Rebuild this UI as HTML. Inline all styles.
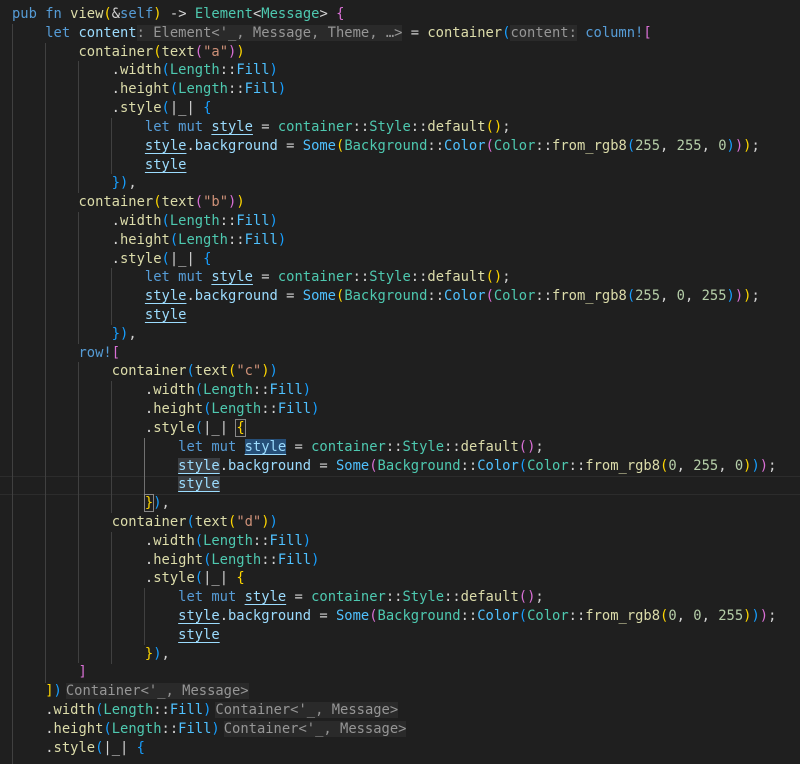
<!DOCTYPE html>
<html><head><meta charset="utf-8"><style>
html,body{margin:0;padding:0;background:#1f1f1f;width:800px;height:748px;overflow:hidden}
pre{position:absolute;left:12px;top:5px;margin:0;font-family:"DejaVu Sans Mono","Liberation Mono",monospace;font-size:13.8px;line-height:18.82px;color:#d4d4d4;white-space:pre}
.k{color:#569cd6}.f{color:#dcdcaa}.t{color:#4ec9b0}.v{color:#9cdcfe}.s{color:#ce9178}.n{color:#b5cea8}
.c{color:#4fc1ff}.g{color:#ffd700}.m{color:#da70d6}.b{color:#179fff}
.h{color:#969696;background:#2a2a2a}
.hm{margin-left:4px}
.u{text-decoration:underline;text-underline-offset:3px}
.w{background:#264f78}.x{background:#3a3d41}
.bx{outline:1px solid #888}
.gd{position:absolute;width:1px;background:#404040}
.cl{position:absolute;left:0;width:800px;top:475.8px;height:18.8px;border-top:1px solid #2c2c2c;border-bottom:1px solid #2c2c2c;box-sizing:border-box}
</style></head><body>
<div class="cl"></div>
<div class="gd" style="left:12px;top:23.8px;height:740px"></div>
<div class="gd" style="left:45px;top:42.6px;height:640px"></div>
<div class="gd" style="left:78px;top:61.4px;height:131.7px"></div>
<div class="gd" style="left:78px;top:212px;height:131.7px"></div>
<div class="gd" style="left:78px;top:362.4px;height:301px"></div>
<div class="gd" style="left:111px;top:117.9px;height:56.5px"></div>
<div class="gd" style="left:111px;top:268.4px;height:56.5px"></div>
<div class="gd" style="left:111px;top:381.4px;height:131.7px"></div>
<div class="gd" style="left:111px;top:531.9px;height:131.7px"></div>
<div class="gd" style="left:144px;top:437.9px;height:56.5px;background:#707070"></div>
<div class="gd" style="left:144px;top:588.4px;height:56.5px"></div>
<pre><span class="k">pub</span> <span class="k">fn</span> <span class="f">view</span><span class="g">(</span>&amp;<span class="k">self</span><span class="g">)</span> -&gt; <span class="t">Element</span>&lt;<span class="t">Message</span>&gt; <span class="m">{</span>
    <span class="k">let</span> <span class="v">content</span><span class="h">: Element&lt;'_, Message, Theme, …&gt;</span> = <span class="f">container</span><span class="b">(</span><span class="h">content:</span> <span class="k">column!</span><span class="m">[</span>
        <span class="f">container</span><span class="g">(</span><span class="f">text</span><span class="m">(</span><span class="s">"a"</span><span class="m">)</span><span class="g">)</span>
            .<span class="f">width</span><span class="b">(</span><span class="t">Length</span>::<span class="c">Fill</span><span class="b">)</span>
            .<span class="f">height</span><span class="b">(</span><span class="t">Length</span>::<span class="c">Fill</span><span class="b">)</span>
            .<span class="f">style</span><span class="b">(</span>|_| <span class="b">{</span>
                <span class="k">let</span> <span class="k">mut</span> <span class="v u">style</span> = <span class="t">container</span>::<span class="t">Style</span>::<span class="f">default</span><span class="g">()</span>;
                <span class="v u">style</span>.<span class="v">background</span> = <span class="c">Some</span><span class="g">(</span><span class="t">Background</span>::<span class="c">Color</span><span class="m">(</span><span class="t">Color</span>::<span class="f">from_rgb8</span><span class="b">(</span><span class="n">255</span>, <span class="n">255</span>, <span class="n">0</span><span class="b">)</span><span class="m">)</span><span class="g">)</span>;
                <span class="v u">style</span>
            <span class="b">})</span>,
        <span class="f">container</span><span class="g">(</span><span class="f">text</span><span class="m">(</span><span class="s">"b"</span><span class="m">)</span><span class="g">)</span>
            .<span class="f">width</span><span class="b">(</span><span class="t">Length</span>::<span class="c">Fill</span><span class="b">)</span>
            .<span class="f">height</span><span class="b">(</span><span class="t">Length</span>::<span class="c">Fill</span><span class="b">)</span>
            .<span class="f">style</span><span class="b">(</span>|_| <span class="b">{</span>
                <span class="k">let</span> <span class="k">mut</span> <span class="v u">style</span> = <span class="t">container</span>::<span class="t">Style</span>::<span class="f">default</span><span class="g">()</span>;
                <span class="v u">style</span>.<span class="v">background</span> = <span class="c">Some</span><span class="g">(</span><span class="t">Background</span>::<span class="c">Color</span><span class="m">(</span><span class="t">Color</span>::<span class="f">from_rgb8</span><span class="b">(</span><span class="n">255</span>, <span class="n">0</span>, <span class="n">255</span><span class="b">)</span><span class="m">)</span><span class="g">)</span>;
                <span class="v u">style</span>
            <span class="b">})</span>,
        <span class="k">row!</span><span class="m">[</span>
            <span class="f">container</span><span class="b">(</span><span class="f">text</span><span class="g">(</span><span class="s">"c"</span><span class="g">)</span><span class="b">)</span>
                .<span class="f">width</span><span class="b">(</span><span class="t">Length</span>::<span class="c">Fill</span><span class="b">)</span>
                .<span class="f">height</span><span class="b">(</span><span class="t">Length</span>::<span class="c">Fill</span><span class="b">)</span>
                .<span class="f">style</span><span class="b">(</span>|_| <span class="g bx">{</span>
                    <span class="k">let</span> <span class="k">mut</span> <span class="v u w">style</span> = <span class="t">container</span>::<span class="t">Style</span>::<span class="f">default</span><span class="m">()</span>;
                    <span class="v u x">style</span>.<span class="v">background</span> = <span class="c">Some</span><span class="m">(</span><span class="t">Background</span>::<span class="c">Color</span><span class="b">(</span><span class="t">Color</span>::<span class="f">from_rgb8</span><span class="g">(</span><span class="n">0</span>, <span class="n">255</span>, <span class="n">0</span><span class="g">)</span><span class="b">)</span><span class="m">)</span>;
                    <span class="v u x">style</span>
                <span class="g bx">}</span><span class="b">)</span>,
            <span class="f">container</span><span class="b">(</span><span class="f">text</span><span class="g">(</span><span class="s">"d"</span><span class="g">)</span><span class="b">)</span>
                .<span class="f">width</span><span class="b">(</span><span class="t">Length</span>::<span class="c">Fill</span><span class="b">)</span>
                .<span class="f">height</span><span class="b">(</span><span class="t">Length</span>::<span class="c">Fill</span><span class="b">)</span>
                .<span class="f">style</span><span class="b">(</span>|_| <span class="g">{</span>
                    <span class="k">let</span> <span class="k">mut</span> <span class="v u">style</span> = <span class="t">container</span>::<span class="t">Style</span>::<span class="f">default</span><span class="m">()</span>;
                    <span class="v u">style</span>.<span class="v">background</span> = <span class="c">Some</span><span class="m">(</span><span class="t">Background</span>::<span class="c">Color</span><span class="b">(</span><span class="t">Color</span>::<span class="f">from_rgb8</span><span class="g">(</span><span class="n">0</span>, <span class="n">0</span>, <span class="n">255</span><span class="g">)</span><span class="b">)</span><span class="m">)</span>;
                    <span class="v u">style</span>
                <span class="g">}</span><span class="b">)</span>,
        <span class="m">]</span>
    <span class="g">]</span><span class="b">)</span><span class="h hm">Container&lt;'_, Message&gt;</span>
    .<span class="f">width</span><span class="b">(</span><span class="t">Length</span>::<span class="c">Fill</span><span class="b">)</span><span class="h hm">Container&lt;'_, Message&gt;</span>
    .<span class="f">height</span><span class="b">(</span><span class="t">Length</span>::<span class="c">Fill</span><span class="b">)</span><span class="h hm">Container&lt;'_, Message&gt;</span>
    .<span class="f">style</span><span class="b">(</span>|_| <span class="b">{</span>
</pre>
</body></html>
